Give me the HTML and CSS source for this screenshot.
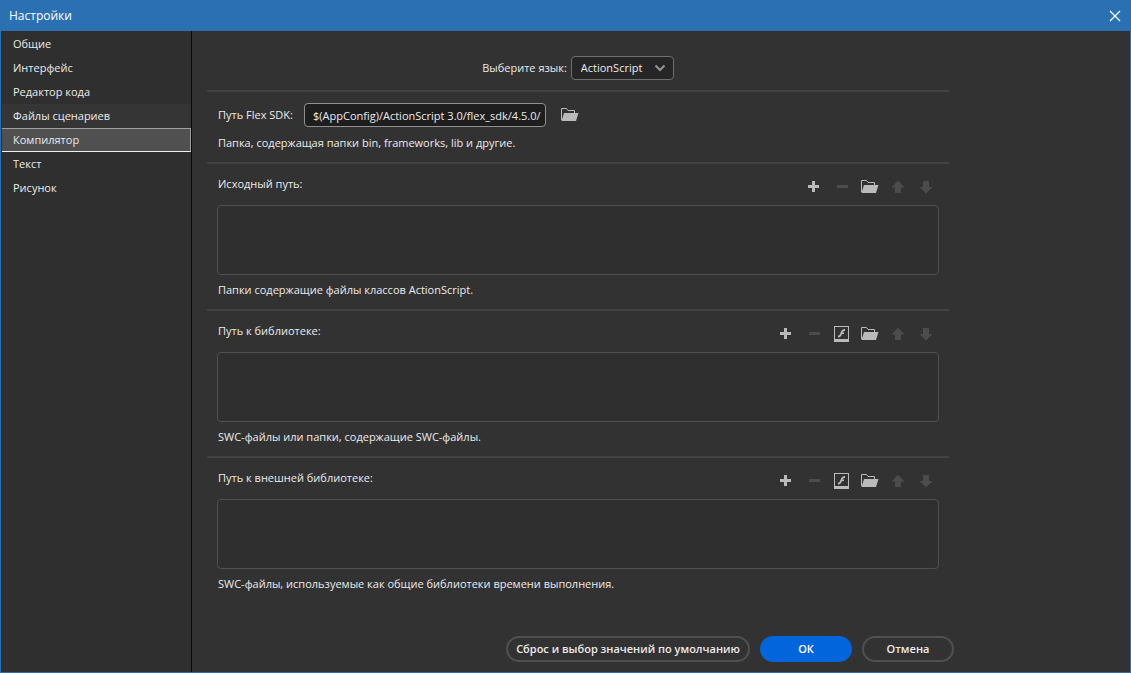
FILE: index.html
```html
<!DOCTYPE html>
<html lang="ru">
<head>
<meta charset="utf-8">
<meta name="viewport" content="width=device-width, initial-scale=1">
<title>Настройки</title>
<link rel="stylesheet" href="styles.css">
</head>
<body>
<svg class="sprite" aria-hidden="true">
  <symbol id="plus" viewBox="0 0 18 18"><path d="M7 3h3v4h4v3h-4v4H7v-4H3V7h4z" fill="currentColor"/></symbol>
  <symbol id="minus" viewBox="0 0 18 18"><path d="M4 7h11v3H4z" fill="currentColor"/></symbol>
  <symbol id="folder" viewBox="0 0 18 18"><path d="M.5 14V2.500h5l1.500 2h6.500V7" fill="none" stroke="currentColor"/><path d="M3 7h14.500L15 15H.500z" fill="currentColor"/></symbol>
  <symbol id="flash" viewBox="0 0 18 18"><path fill-rule="evenodd" d="M1 1h15v16H1zM2 2v12h13V2z" fill="currentColor"/><path d="M12 4v2c-1.500 0-2 .5-2.400 1.500H11V9H9c-.8 2-1.700 3.500-4 3.500v-2c1.300 0 1.800-.8 2.400-2.300C8.200 6 9.200 4 12 4z" fill="currentColor"/></symbol>
  <symbol id="up" viewBox="0 0 18 18"><path d="M9 2.500l6.500 7H12V15H6V9.500H2.500z" fill="currentColor"/></symbol>
  <symbol id="down" viewBox="0 0 18 18"><path d="M9 15.500L15.500 9H12V3H6v6H2.500z" fill="currentColor"/></symbol>
</svg>
<div class="window">
  <header class="titlebar">
    <h1 class="title">Настройки</h1>
    <button class="close" type="button" aria-label="Закрыть"><svg viewBox="0 0 12 12"><path d="M1 1l10 10M11 1L1 11" fill="none" stroke="currentColor" stroke-width="1.300"/></svg></button>
  </header>
  <div class="body">
    <nav class="sidebar" aria-label="Категории">
      <button class="tab" type="button">Общие</button>
      <button class="tab" type="button">Интерфейс</button>
      <button class="tab" type="button">Редактор кода</button>
      <button class="tab hovered" type="button">Файлы сценариев</button>
      <button class="tab selected" type="button" aria-current="page">Компилятор</button>
      <button class="tab" type="button">Текст</button>
      <button class="tab" type="button">Рисунок</button>
    </nav>
    <main class="main">
      <div class="panel">
        <div class="language">
          <label for="language">Выберите язык:</label>
          <span class="dropdown">
            <select id="language"><option>ActionScript</option></select>
            <svg class="chevron" viewBox="0 0 12 8" aria-hidden="true"><path d="M1.500 1.500L6 6l4.500-4.500" fill="none" stroke="currentColor" stroke-width="2"/></svg>
          </span>
        </div>
        <section class="sdk">
          <div class="sdk-row">
            <label for="sdk">Путь Flex SDK:</label>
            <input id="sdk" type="text" value="$(AppConfig)/ActionScript 3.0/flex_sdk/4.5.0/">
            <button class="tool" type="button" aria-label="Обзор"><svg><use href="#folder"/></svg></button>
          </div>
          <p class="hint">Папка, содержащая папки bin, frameworks, lib и другие.</p>
        </section>
        <section class="paths">
          <div class="paths-head">
            <h2 class="label" id="source">Исходный путь:</h2>
            <div class="tools">
              <button class="tool" type="button" aria-label="Добавить"><svg><use href="#plus"/></svg></button>
              <button class="tool" type="button" aria-label="Удалить" disabled><svg><use href="#minus"/></svg></button>
              <button class="tool" type="button" aria-label="Обзор"><svg><use href="#folder"/></svg></button>
              <button class="tool" type="button" aria-label="Вверх" disabled><svg><use href="#up"/></svg></button>
              <button class="tool" type="button" aria-label="Вниз" disabled><svg><use href="#down"/></svg></button>
            </div>
          </div>
          <div class="list" role="listbox" tabindex="0" aria-labelledby="source"></div>
          <p class="hint">Папки содержащие файлы классов ActionScript.</p>
        </section>
        <section class="paths">
          <div class="paths-head">
            <h2 class="label" id="library">Путь к библиотеке:</h2>
            <div class="tools">
              <button class="tool" type="button" aria-label="Добавить"><svg><use href="#plus"/></svg></button>
              <button class="tool" type="button" aria-label="Удалить" disabled><svg><use href="#minus"/></svg></button>
              <button class="tool" type="button" aria-label="Выбрать SWC-файл"><svg><use href="#flash"/></svg></button>
              <button class="tool" type="button" aria-label="Обзор"><svg><use href="#folder"/></svg></button>
              <button class="tool" type="button" aria-label="Вверх" disabled><svg><use href="#up"/></svg></button>
              <button class="tool" type="button" aria-label="Вниз" disabled><svg><use href="#down"/></svg></button>
            </div>
          </div>
          <div class="list" role="listbox" tabindex="0" aria-labelledby="library"></div>
          <p class="hint">SWC-файлы или папки, содержащие SWC-файлы.</p>
        </section>
        <section class="paths">
          <div class="paths-head">
            <h2 class="label" id="external">Путь к внешней библиотеке:</h2>
            <div class="tools">
              <button class="tool" type="button" aria-label="Добавить"><svg><use href="#plus"/></svg></button>
              <button class="tool" type="button" aria-label="Удалить" disabled><svg><use href="#minus"/></svg></button>
              <button class="tool" type="button" aria-label="Выбрать SWC-файл"><svg><use href="#flash"/></svg></button>
              <button class="tool" type="button" aria-label="Обзор"><svg><use href="#folder"/></svg></button>
              <button class="tool" type="button" aria-label="Вверх" disabled><svg><use href="#up"/></svg></button>
              <button class="tool" type="button" aria-label="Вниз" disabled><svg><use href="#down"/></svg></button>
            </div>
          </div>
          <div class="list" role="listbox" tabindex="0" aria-labelledby="external"></div>
          <p class="hint">SWC-файлы, используемые как общие библиотеки времени выполнения.</p>
        </section>
      </div>
      <footer class="actions">
        <button class="action reset" type="button">Сброс и выбор значений по умолчанию</button>
        <button class="action primary" type="button">ОК</button>
        <button class="action" type="button">Отмена</button>
      </footer>
    </main>
  </div>
</div>
</body>
</html>
```
FILE: styles.css
```css
* { box-sizing: border-box; }
body {
  margin: 0;
  background: #323232;
  color: #ebebeb;
  font: 11px/16px "Open Sans", "Noto Sans", sans-serif;
}
button, input, select { font: inherit; color: inherit; }
button { padding: 0; border: 0; background: none; }
h1, h2, p { margin: 0; font-size: inherit; font-weight: normal; }
.sprite { display: none; }

.window {
  display: flex;
  flex-direction: column;
  min-height: 100vh;
  border: 1px solid #2a70b2;
  border-top: 0;
}
.titlebar {
  display: flex;
  align-items: center;
  justify-content: space-between;
  height: 31px;
  padding: 0 9px 0 8px;
  background: #2a70b2;
  color: #fff;
}
.title { font-size: 12px; }
.close { display: flex; }
.close svg { width: 12px; height: 12px; }

.body { display: flex; flex: 1; }
.sidebar {
  display: flex;
  flex-direction: column;
  flex: 0 0 191px;
  padding: 1px 0 0 1px;
  border-right: 1px solid #0a0a0a;
  background: #2f2f2f;
}
.tab { height: 24px; padding: 0 11px; text-align: left; }
.hovered { background: #353535; }
.selected {
  border: 1px solid #a0a0a0;
  border-left: 0;
  border-bottom-color: #f0f0f0;
  background: #505050;
}

.main { flex: 1; min-width: 0; padding: 25px 15px 10px; }
.panel { max-width: 742px; }
.language {
  display: flex;
  justify-content: center;
  align-items: center;
  gap: 4px;
  padding: 0 0 10px;
}
.dropdown { position: relative; }
.dropdown select {
  display: block;
  width: 103px;
  height: 24px;
  padding: 0 9px;
  appearance: none;
  border: 1px solid #6e6e6e;
  border-radius: 4px;
  background: #262626;
}
.chevron {
  position: absolute;
  top: 8px;
  right: 8px;
  width: 12px;
  height: 8px;
  color: #959595;
  pointer-events: none;
}

.sdk, .paths { border-top: 2px solid #424242; }
.sdk { padding: 11px 10px; }
.sdk-row { display: flex; align-items: center; margin-bottom: 8px; }
.sdk-row label { width: 87px; padding-left: 1px; white-space: nowrap; }
.sdk-row input {
  width: 242px;
  height: 24px;
  margin-right: 15px;
  padding: 0 2px 0 8px;
  border: 1px solid #909090;
  border-radius: 4px;
  background: #1e1e1e;
}
.hint { padding-left: 1px; }

.paths { padding: 12px 10px 11px; }
.paths-head { display: flex; justify-content: space-between; height: 29px; }
.label { padding-left: 1px; }
.tools { display: flex; gap: 10px; padding: 2px 4px 0 0; }
.tool { display: block; width: 18px; height: 18px; color: #bababa; }
.tool:disabled { color: #4c4c4c; }
.tool svg { display: block; width: 18px; height: 18px; }
.list {
  height: 70px;
  margin-bottom: 7px;
  border: 1px solid #505050;
  border-radius: 4px;
  background: #2f2f2f;
}

.actions {
  display: flex;
  justify-content: flex-end;
  gap: 10px;
  max-width: 747px;
  margin-top: 33px;
}
.action {
  width: 92px;
  height: 26px;
  border: 2px solid #505050;
  border-radius: 13px;
  font-weight: 600;
}
.reset { width: 244px; }
.primary { border-color: #0265dc; background: #0265dc; color: #fff; }
```
